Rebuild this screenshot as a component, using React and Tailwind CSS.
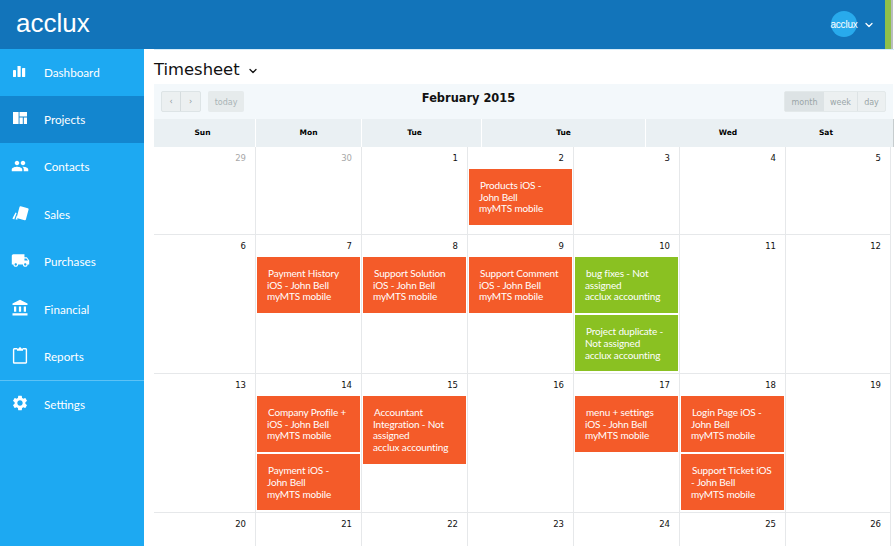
import React from "react";
import { ChevronDown } from "lucide-react";
import { MdPeople, MdLocalShipping, MdAccountBalance, MdSettings } from "react-icons/md";

const BarsIcon = () => (
  <svg width="18" height="18" viewBox="0 0 18 18" fill="currentColor">
    <rect x="2" y="8" width="3" height="7" rx="0.4" />
    <rect x="6.5" y="4" width="3.2" height="11" rx="0.4" />
    <rect x="11" y="6" width="3.2" height="9" rx="0.4" />
  </svg>
);
const LayoutIcon = () => (
  <svg width="18" height="18" viewBox="0 0 18 18" fill="currentColor">
    <rect x="2" y="3" width="5.6" height="12" />
    <rect x="8.5" y="3" width="7.5" height="4.5" />
    <rect x="8.5" y="8.5" width="3.3" height="6.5" />
    <rect x="12.8" y="8.5" width="3.2" height="6.5" />
  </svg>
);
const CardsIcon = () => (
  <svg width="18" height="18" viewBox="0 0 18 18" fill="currentColor">
    <rect x="7" y="3" width="9.4" height="12.4" rx="1" transform="rotate(15 11.7 9.2)" />
    <path d="M4.6 8.6 L5.6 9 L3.2 15.4 L1.4 14.6 Z" />
    <path d="M5.8 11.4 L6.6 15.6 L4.6 15.6 Z" />
  </svg>
);
const ClipIcon = () => (
  <svg width="18" height="18" viewBox="0 0 18 18" fill="none" stroke="currentColor" strokeWidth="1.4">
    <path d="M6 2.8H3.2a.6.6 0 0 0-.6.6v13a.6.6 0 0 0 .6.6h11.6a.6.6 0 0 0 .6-.6v-13a.6.6 0 0 0-.6-.6H12" />
    <path d="M6 4.8V2.4h1.8a1.2 1.2 0 0 1 2.4 0H12v2.4z" fill="currentColor" stroke="none" />
  </svg>
);

const nav = [
  ["Dashboard", BarsIcon, false, "h-[47px]"],
  ["Projects", LayoutIcon, true, "h-[47px]"],
  ["Contacts", () => <MdPeople size={18} />, false, "h-[48px]"],
  ["Sales", CardsIcon, false, "h-[47.5px]"],
  ["Purchases", () => <MdLocalShipping size={19} />, false, "h-[47.5px]"],
  ["Financial", () => <MdAccountBalance size={18} />, false, "h-[47.5px]"],
  ["Reports", ClipIcon, false, "h-[47.5px]"],
];

const O = "o", G = "g";
const weeks = [
  { h: "h-[88px]", days: [[29, 1], [30, 1], [1], [2, 0, [[O, ["Products iOS -", "John Bell", "myMTS mobile"]]]], [3], [4], [5]] },
  { h: "h-[139px]", days: [[6], [7, 0, [[O, ["Payment History", "iOS - John Bell", "myMTS mobile"]]]], [8, 0, [[O, ["Support Solution", "iOS - John Bell", "myMTS mobile"]]]], [9, 0, [[O, ["Support Comment", "iOS - John Bell", "myMTS mobile"]]]], [10, 0, [[G, ["bug fixes - Not", "assigned", "acclux accounting"]], [G, ["Project duplicate -", "Not assigned", "acclux accounting"]]]], [11], [12]] },
  { h: "h-[139px]", days: [[13], [14, 0, [[O, ["Company Profile +", "iOS - John Bell", "myMTS mobile"]], [O, ["Payment iOS -", "John Bell", "myMTS mobile"]]]], [15, 0, [[O, ["Accountant", "Integration - Not", "assigned", "acclux accounting"]]]], [16], [17, 0, [[O, ["menu + settings", "iOS - John Bell", "myMTS mobile"]]]], [18, 0, [[O, ["Login Page iOS -", "John Bell", "myMTS mobile"]], [O, ["Support Ticket iOS", "- John Bell", "myMTS mobile"]]]], [19]] },
  { h: "h-[40px]", days: [[20], [21], [22], [23], [24], [25], [26]] },
];
const cols = ["w-[102px]", "w-[106px]", "w-[106px]", "w-[106px]", "w-[106px]", "w-[106px]", "w-[105px]"];
const heads = [
  ["Sun", "w-[102px] pr-[4px]"],
  ["Mon", "w-[106px]"],
  ["Tue", "w-[120px] pr-[14px]"],
  ["Tue", "w-[164px]"],
  ["Wed", "w-[140px] pl-[24px]"],
  ["Sat", "w-[80px]"],
];

export default function App() {
  return (
    <div className="w-[894px] h-[546px] overflow-hidden bg-white flex flex-col font-['Lato',sans-serif]">
      <header className="h-[49px] shrink-0 bg-[#1274ba] flex items-center text-white">
        <div className="pl-[16px] text-[26px] leading-none font-['Liberation_Sans',sans-serif] -mt-[3px]">acclux</div>
        <div className="ml-auto flex items-center h-full">
          <div className="w-[26px] h-[26px] -mt-[1px] rounded-full bg-[#28aaec] text-[10px] flex items-center justify-center font-['Liberation_Sans',sans-serif] tracking-[-0.2px]">acclux</div>
          <ChevronDown size={12} strokeWidth={2.5} className="ml-[6px] mr-[10px]" />
          <div className="w-[6px] h-full bg-[#8fc04a]" />
          <div className="w-[2px] h-full bg-[#b9bdbf]" />
          <div className="w-[1px] h-full bg-white" />
        </div>
      </header>
      <div className="flex flex-1 min-h-0">
        <aside className="w-[144px] shrink-0 bg-[#1da9f2] text-white text-[11.7px]">
          {nav.map(([label, Icon, active, h]) => (
            <div key={label} className={`${h} flex items-center ${active ? "bg-[#1386cf]" : ""} ${label === "Reports" ? "border-b border-[#5cc2f6]" : ""}`}>
              <span className="w-[44px] pl-[11px] -mt-[3px]"><Icon /></span>
              <span>{label}</span>
            </div>
          ))}
          <div className="h-[47.5px] flex items-center">
            <span className="w-[44px] pl-[11px] -mt-[3px]"><MdSettings size={18} /></span>
            <span>Settings</span>
          </div>
        </aside>
        <main className="flex-1 min-w-0 pl-[10px] font-['DejaVu_Sans',sans-serif]">
          <div className="h-[35px] border-t border-[#d5ecf9] flex items-center text-[#111] text-[16.4px] pt-[6px]">
            <span>Timesheet</span>
            <ChevronDown size={12} strokeWidth={2.5} className="ml-[7px] mt-[2px]" />
          </div>
          <div className="w-[739px] h-[35px] bg-[#f3f8fb] pl-[7px] pr-[7px] flex items-center">
            <div className="flex h-[21px] border border-[#dde4e6] rounded-[2px] bg-[#ecf0f1] text-[#8d9a9c] text-[8px]">
              <span className="w-[19px] flex items-center justify-center border-r border-[#d5dcde]">‹</span>
              <span className="w-[19px] flex items-center justify-center">›</span>
            </div>
            <div className="ml-[7px] w-[36px] h-[21px] pt-[2px] rounded-[2px] bg-[#e6ebec] text-[#a9b4b6] text-[8px] flex items-center justify-center">today</div>
            <div className="flex-1 text-center text-[11.4px] font-bold text-[#111] -mt-[6px] pr-[91px]">February 2015</div>
            <div className="flex h-[21px] rounded-[2px] text-[8px] text-[#9aa5a7] bg-[#ecf0f1] border border-[#e3e9ea]">
              <span className="w-[39px] pt-[2px] flex items-center justify-center bg-[#dde3e5]">month</span>
              <span className="w-[34px] pt-[2px] flex items-center justify-center border-r border-[#dde3e5]">week</span>
              <span className="w-[27px] pt-[2px] flex items-center justify-center">day</span>
            </div>
          </div>
          <div className="w-[740px] flex h-[28px] bg-[#eaf0f3] border-r border-[#c6ccce]">
            {heads.map(([d, w], i) => (
              <div key={i} className={`${w} shrink-0 flex items-center justify-center text-[7.5px] font-bold text-black ${i < 4 ? "border-r border-white" : ""}`}>{d}</div>
            ))}
          </div>
          {weeks.map((wk, i) => (
            <div key={i} className={`w-[737px] flex ${wk.h} border-b border-[#e6e8ea]`}>
              {wk.days.map(([n, muted, events], j) => (
                <div key={j} className={`${cols[j]} shrink-0 border-r border-[#e6e8ea] flex flex-col`}>
                  <div className={`h-[22px] pt-[6px] pr-[9px] text-right text-[8.5px] leading-[11px] ${muted ? "text-[#a8a8a8]" : "text-[#111]"}`}>{n}</div>
                  <div className="px-[1px] flex flex-col gap-[2px]">
                    {(events || []).map(([c, lines], k) => (
                      <div key={k} className={`${c === O ? "bg-[#f45b29]" : "bg-[#8ac122]"} text-white text-[10px] leading-[11.7px] pl-[10px] pt-[11px] pb-[10px] font-['Lato',sans-serif] tracking-[-0.15px]`}>
                        {lines.map((l, m) => <div key={l} className={m === 0 ? "pl-[1px]" : ""}>{l}</div>)}
                      </div>
                    ))}
                  </div>
                </div>
              ))}
            </div>
          ))}
        </main>
      </div>
    </div>
  );
}
